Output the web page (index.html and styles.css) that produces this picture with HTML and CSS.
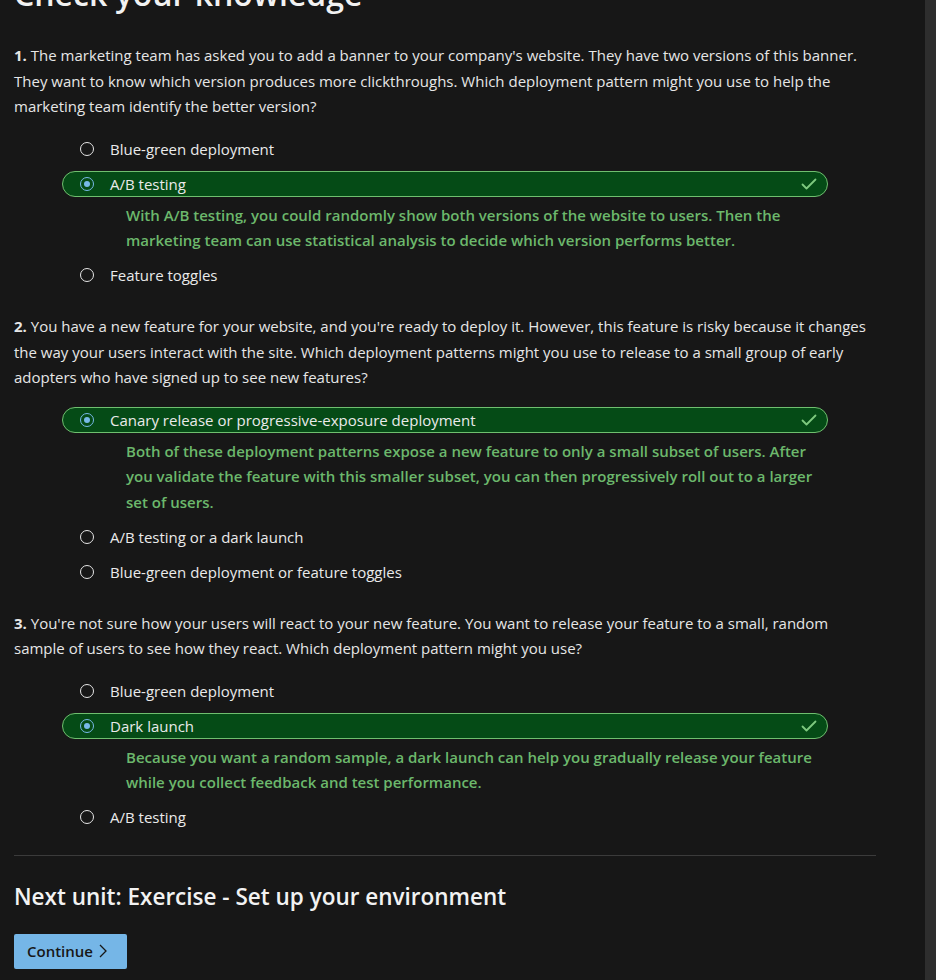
FILE: index.html
```html
<!DOCTYPE html>
<html lang="en">
<head>
<meta charset="utf-8">
<title>Check your knowledge</title>
<link rel="stylesheet" href="styles.css">
</head>
<body>
<div class="layout">
  <main class="content">
    <h1 class="title">Check your knowledge</h1>

    <section class="question">
      <p class="prompt"><strong>1.</strong> The marketing team has asked you to add a banner to your company's website. They have two versions of this banner. They want to know which version produces more clickthroughs. Which deployment pattern might you use to help the marketing team identify the better version?</p>
      <div class="options">
        <div class="option"><span class="radio"></span><span class="label">Blue-green deployment</span></div>
        <div class="option-group">
          <div class="option selected"><span class="radio checked"></span><span class="label">A/B testing</span>
            <svg class="check" width="16" height="12" viewBox="0 0 16 12"><polyline points="1.5,6.5 5.5,10.5 14.5,1.5" fill="none" stroke="#7fc97f" stroke-width="1.8" stroke-linecap="round" stroke-linejoin="round"/></svg>
          </div>
          <p class="feedback">With A/B testing, you could randomly show both versions of the website to users. Then the marketing team can use statistical analysis to decide which version performs better.</p>
        </div>
        <div class="option"><span class="radio"></span><span class="label">Feature toggles</span></div>
      </div>
    </section>

    <section class="question">
      <p class="prompt"><strong>2.</strong> You have a new feature for your website, and you're ready to deploy it. However, this feature is risky because it changes the way your users interact with the site. Which deployment patterns might you use to release to a small group of early adopters who have signed up to see new features?</p>
      <div class="options">
        <div class="option-group">
          <div class="option selected"><span class="radio checked"></span><span class="label">Canary release or progressive-exposure deployment</span>
            <svg class="check" width="16" height="12" viewBox="0 0 16 12"><polyline points="1.5,6.5 5.5,10.5 14.5,1.5" fill="none" stroke="#7fc97f" stroke-width="1.8" stroke-linecap="round" stroke-linejoin="round"/></svg>
          </div>
          <p class="feedback">Both of these deployment patterns expose a new feature to only a small subset of users. After you validate the feature with this smaller subset, you can then progressively roll out to a larger set of users.</p>
        </div>
        <div class="option"><span class="radio"></span><span class="label">A/B testing or a dark launch</span></div>
        <div class="option"><span class="radio"></span><span class="label">Blue-green deployment or feature toggles</span></div>
      </div>
    </section>

    <section class="question last">
      <p class="prompt"><strong>3.</strong> You're not sure how your users will react to your new feature. You want to release your feature to a small, random sample of users to see how they react. Which deployment pattern might you use?</p>
      <div class="options">
        <div class="option"><span class="radio"></span><span class="label">Blue-green deployment</span></div>
        <div class="option-group">
          <div class="option selected"><span class="radio checked"></span><span class="label">Dark launch</span>
            <svg class="check" width="16" height="12" viewBox="0 0 16 12"><polyline points="1.5,6.5 5.5,10.5 14.5,1.5" fill="none" stroke="#7fc97f" stroke-width="1.8" stroke-linecap="round" stroke-linejoin="round"/></svg>
          </div>
          <p class="feedback">Because you want a random sample, a dark launch can help you gradually release your feature while you collect feedback and test performance.</p>
        </div>
        <div class="option"><span class="radio"></span><span class="label">A/B testing</span></div>
      </div>
    </section>

    <hr class="divider">

    <h2 class="next">Next unit: Exercise - Set up your environment</h2>
    <button class="continue" type="button">Continue <svg class="chev" width="8" height="14" viewBox="0 0 8 14"><polyline points="1,1 7,7 1,13" fill="none" stroke="#171717" stroke-width="1.3"/></svg></button>
  </main>
  <div class="scrollbar"></div>
</div>
</body>
</html>
```

FILE: styles.css
```css
html, body {
  margin: 0;
  padding: 0;
  height: 100%;
  overflow: hidden;
  background: #171717;
}
body {
  font-family: "Open Sans", "Noto Sans", sans-serif;
  font-size: 15px;
  color: #e6e6e6;
}
.layout {
  display: flex;
  height: 980px;
}
.content {
  flex: 1;
  padding: 0 0 0 14px;
  max-width: 862px;
}
.scrollbar {
  margin-left: auto;
  width: 11px;
  background: #2e2e2e;
}
.title {
  margin: -27px 0 0 0;
  font-size: 32px;
  font-weight: 600;
  line-height: 42px;
  color: #f2f2f2;
}
.question {
  margin: 0 0 26px 0;
}
.question.last {
  margin-bottom: 25px;
}
.title + .question {
  margin-top: 28px;
}
.prompt {
  margin: 0 0 16px 0;
  line-height: 25.6px;
}
.prompt strong {
  font-weight: 700;
}
.options {
  margin-left: 48px;
  width: 766px;
  display: flex;
  flex-direction: column;
  gap: 9px;
}
.option {
  display: flex;
  align-items: center;
  height: 26px;
  box-sizing: border-box;
  border: 1px solid transparent;
  border-radius: 14px;
  padding-left: 17px;
}
.option.selected {
  background: #054b16;
  border-color: #6fbf6f;
}
.radio {
  width: 14px;
  height: 14px;
  box-sizing: border-box;
  border: 1.5px solid #e6e6e6;
  border-radius: 50%;
  margin-right: 16px;
  flex: none;
}
.radio.checked {
  border-color: #78b9e8;
  display: flex;
  align-items: center;
  justify-content: center;
}
.radio.checked::after {
  content: "";
  width: 6px;
  height: 6px;
  border-radius: 50%;
  background: #78b9e8;
}
.label {
  line-height: 24px;
  color: #eaeaea;
}
.check {
  margin-left: auto;
  margin-right: 10px;
}
.feedback {
  margin: 0 0 -1px 0;
  padding: 6px 6px 0 64px;
  line-height: 25.6px;
  color: #6cb86c;
  font-weight: 600;
}
.divider {
  margin: 0;
  border: none;
  border-top: 1px solid #3b3b3b;
  height: 0;
}
.next {
  margin: 26px 0 22px 0;
  font-size: 22.5px;
  font-weight: 600;
  line-height: 30px;
  color: #f2f2f2;
}
.continue {
  display: flex;
  align-items: center;
  gap: 6px;
  height: 35px;
  padding: 0 20px 0 13px;
  border: none;
  border-radius: 2px;
  background: #75b6e7;
  color: #171717;
  font-family: "Open Sans", "Noto Sans", sans-serif;
  font-size: 15px;
  font-weight: 600;
}
```
